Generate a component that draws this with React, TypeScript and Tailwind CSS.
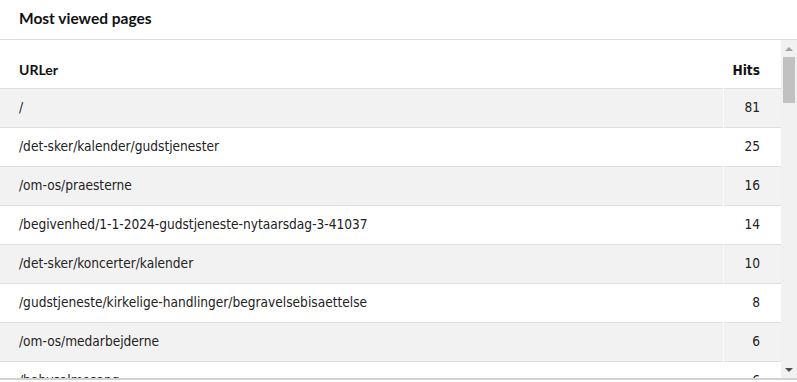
const rows = [
  { url: "/", hits: 81 },
  { url: "/det-sker/kalender/gudstjenester", hits: 25 },
  { url: "/om-os/praesterne", hits: 16 },
  { url: "/begivenhed/1-1-2024-gudstjeneste-nytaarsdag-3-41037", hits: 14 },
  { url: "/det-sker/koncerter/kalender", hits: 10 },
  { url: "/gudstjeneste/kirkelige-handlinger/begravelsebisaettelse", hits: 8 },
  { url: "/om-os/medarbejderne", hits: 6 },
  { url: "/babysalmesang", hits: 6 },
];

export default function App() {
  return (
    <div className="h-[382px] w-[797px] overflow-hidden bg-white font-['DejaVu_Sans_Condensed','DejaVu_Sans',sans-serif] text-[#222]">
      <div className="flex h-[40px] items-start border-b border-[#dcdcdc] px-[19px] pt-[8px]">
        <h2 className="font-['Lato','Open_Sans',sans-serif] text-[15.5px] font-bold leading-[20px] text-[#111]">
          Most viewed pages
        </h2>
      </div>

      <div className="flex h-[340px] border-b-2 border-[#d2d2d2]">
        <div className="flex-1 overflow-hidden">
          <table className="w-full border-collapse text-[13.6px]">
            <thead>
              <tr className="h-[48px] border-b border-[#e0e0e0]">
                <th className="pl-[19px] pt-[12px] text-left font-['Lato','Open_Sans',sans-serif] text-[14px] font-bold text-[#111]">
                  URLer
                </th>
                <th className="w-[58px] pr-[21px] pt-[12px] text-right text-[13.6px] font-bold text-[#111]">
                  Hits
                </th>
              </tr>
            </thead>
            <tbody>
              {rows.map((row, index) => (
                <tr
                  key={row.url}
                  className={`h-[39px] border-b border-[#e0e0e0] ${index % 2 === 0 ? "bg-[#f2f2f2]" : "bg-white"}`}
                >
                  <td className="pl-[19px]">{row.url}</td>
                  <td className="border-l border-white/60 pr-[21px] text-right">{row.hits}</td>
                </tr>
              ))}
            </tbody>
          </table>
        </div>

        <div className="flex w-[16px] flex-col items-center bg-[#f1f1f1]">
          <div className="flex h-[17px] w-full items-center justify-center">
            <svg width="8" height="4" viewBox="0 0 8 4">
              <polygon points="0,4 4,0 8,4" fill="#a3a3a3" />
            </svg>
          </div>
          <div className="h-[46px] w-[12px] bg-[#c1c1c1]" />
          <div className="flex-1" />
          <div className="flex h-[17px] w-full items-center justify-center">
            <svg width="8" height="4" viewBox="0 0 8 4">
              <polygon points="0,0 8,0 4,4" fill="#505050" />
            </svg>
          </div>
        </div>
      </div>
    </div>
  );
}
